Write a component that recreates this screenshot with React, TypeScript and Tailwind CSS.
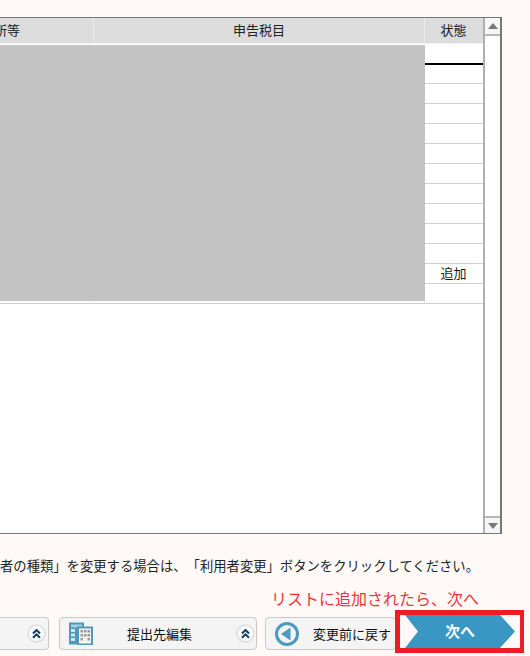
const FONT = "font-['Noto_Sans_CJK_JP','Noto_Sans_CJK_SC',sans-serif] [text-spacing-trim:space-all]";

function Chevrons() {
  return (
    <span className="w-[19px] h-[19px] rounded-full bg-[#fbfbfb] border-2 border-[#e2e2e2] flex items-center justify-center shrink-0">
      <svg width="9" height="10" viewBox="0 0 9 10">
        <path d="M1 4.5 L4.5 1 L8 4.5 M1 8.8 L4.5 5.3 L8 8.8" fill="none" stroke="#0f3b6b" strokeWidth="2" />
      </svg>
    </span>
  );
}

function Building() {
  return (
    <svg width="24" height="23" viewBox="0 0 24 23" className="shrink-0">
      <rect x="0" y="0.5" width="15" height="22" fill="#4e9abb" />
      <rect x="2" y="2.5" width="11" height="3" fill="#a9cfdf" />
      <rect x="2" y="7" width="4" height="3" fill="#d9e6ec" />
      <rect x="2" y="11.5" width="4" height="3" fill="#d9e6ec" />
      <rect x="2" y="16" width="4" height="3" fill="#d9e6ec" />
      <rect x="9" y="5.5" width="14" height="17" fill="#f4f4f4" stroke="#4e9abb" strokeWidth="2" />
      <g fill="#9a9a9a">
        <rect x="11.5" y="8" width="2.5" height="2.5" />
        <rect x="15" y="8" width="2.5" height="2.5" />
        <rect x="18.5" y="8" width="2.5" height="2.5" />
        <rect x="11.5" y="12" width="2.5" height="2.5" />
        <rect x="15" y="12" width="2.5" height="2.5" />
        <rect x="18.5" y="12" width="2.5" height="2.5" />
        <rect x="11.5" y="16" width="2.5" height="2.5" />
        <rect x="18.5" y="16" width="2.5" height="2.5" />
      </g>
    </svg>
  );
}

function BackIcon() {
  return (
    <svg width="26" height="26" viewBox="0 0 26 26" className="shrink-0">
      <circle cx="13" cy="13" r="10.5" fill="#f4f4f4" stroke="#4e9abb" strokeWidth="3" />
      <path d="M7 13 L16.5 6.5 V19.5 Z" fill="#4e9abb" />
    </svg>
  );
}

function Row({ text, first }: { text?: string; first?: boolean }) {
  return (
    <div className={`flex shrink-0 border-b border-[#cfcfcf] ${first ? "h-[19px]" : "h-5"}`}>
      <div className="w-[94px] border-r border-[#e4e4e4]" />
      <div className="w-[331px] border-r border-[#e4e4e4]" />
      <div className="w-[57px] pb-[2px] flex items-center justify-center text-[13px] leading-none text-[#1a1a1a]">{text}</div>
    </div>
  );
}

export default function App() {
  const rows: { text?: string }[] = [{}, {}, {}, {}, {}, {}, {}, {}, {}, {}, { text: "追加" }, {}];
  return (
    <div className={`relative w-[530px] h-[656px] overflow-hidden bg-[#fff9f7] flex flex-col ${FONT}`}>
      <div className="mt-[17px] w-[502px] h-[517px] shrink-0 flex bg-white border-t border-b border-r-2 border-[#777777]">
        <div className="relative w-[485px] flex flex-col border-r-2 border-[#b0b0b0]">
          <div className="flex h-[26px] shrink-0 bg-[#dcdcdc] border-b border-[#f2f2f2] text-[13px] text-[#222222]">
            <div className="w-[94px] border-r border-[#ececec] overflow-hidden">
              <div className="ml-[-6px] leading-[24px] whitespace-nowrap">所等</div>
            </div>
            <div className="w-[331px] border-r border-[#ececec] text-center leading-[24px]">申告税目</div>
            <div className="w-[57px] text-center leading-[24px]">状態</div>
          </div>
          <div className="h-[21px] shrink-0 border-b-2 border-black" />
          {rows.map((r, i) => (
            <Row key={i} text={r.text} first={i === 0} />
          ))}
          <div className="absolute left-0 top-[27px] w-[425px] h-[256px] bg-[#c3c3c3]" />
        </div>
        <div className="w-[15px] flex flex-col justify-between">
          <div className="h-[18px] border-b-2 border-[#b8b8b8] flex items-center justify-center bg-[#f6f6f6]">
            <svg width="10" height="6" viewBox="0 0 10 6"><path d="M0 6 L5 0 L10 6 Z" fill="#777777" /></svg>
          </div>
          <div className="h-[17px] border-t-2 border-[#b8b8b8] flex items-center justify-center bg-[#f6f6f6]">
            <svg width="10" height="6" viewBox="0 0 10 6"><path d="M0 0 L5 6 L10 0 Z" fill="#777777" /></svg>
          </div>
        </div>
      </div>

      <div className="mt-[22px] w-[479px] h-[20px] shrink-0 overflow-hidden flex justify-end whitespace-nowrap text-[13.33px] leading-[20px] text-[#222222]">
        者の種類」を変更する場合は、「利用者変更」ボタンをクリックしてください。
      </div>

      <div className="mt-[10px] ml-[271px] h-[24px] shrink-0 text-[16px] leading-[24px] text-[#f0343c] whitespace-nowrap">
        リストに追加されたら、次へ
      </div>

      <div className="mt-[7px] flex h-[33px] shrink-0 items-center">
        <div className="w-[49px] h-[33px] shrink-0 border border-l-0 border-[#c8c8c8] rounded-r-[4px] bg-[#f4f4f4] flex items-center justify-end pr-[2px]">
          <Chevrons />
        </div>
        <div className="ml-[10px] w-[198px] h-[33px] shrink-0 border border-[#c8c8c8] rounded-[4px] bg-[#f4f4f4] flex items-center pl-[9px] pr-[1px]">
          <Building />
          <span className="flex-1 pr-[10px] text-center text-[13px] text-[#111111]">提出先編集</span>
          <Chevrons />
        </div>
        <div className="ml-[8px] w-[131px] h-[33px] shrink-0 border border-[#c8c8c8] rounded-[4px] bg-[#f4f4f4] flex items-center pl-[8px]">
          <BackIcon />
          <span className="ml-[13px] text-[13px] whitespace-nowrap text-[#111111]">変更前に戻す</span>
        </div>
      </div>

      <div className="absolute left-[395px] top-[610px] w-[129px] h-[43px] border-[5px] border-r-4 border-[#ee1c25] bg-[#fff9f9] flex items-center justify-center">
        <div className="relative w-[110px] h-[33px] flex items-center justify-center">
          <svg width="110" height="33" viewBox="0 0 110 33" className="absolute inset-0">
            <path d="M0 0 H95 L110 16.5 L95 33 H0 L13 16.5 Z" fill="#3a97c4" />
          </svg>
          <span className="relative text-[15px] font-bold text-white">次へ</span>
        </div>
      </div>
    </div>
  );
}
